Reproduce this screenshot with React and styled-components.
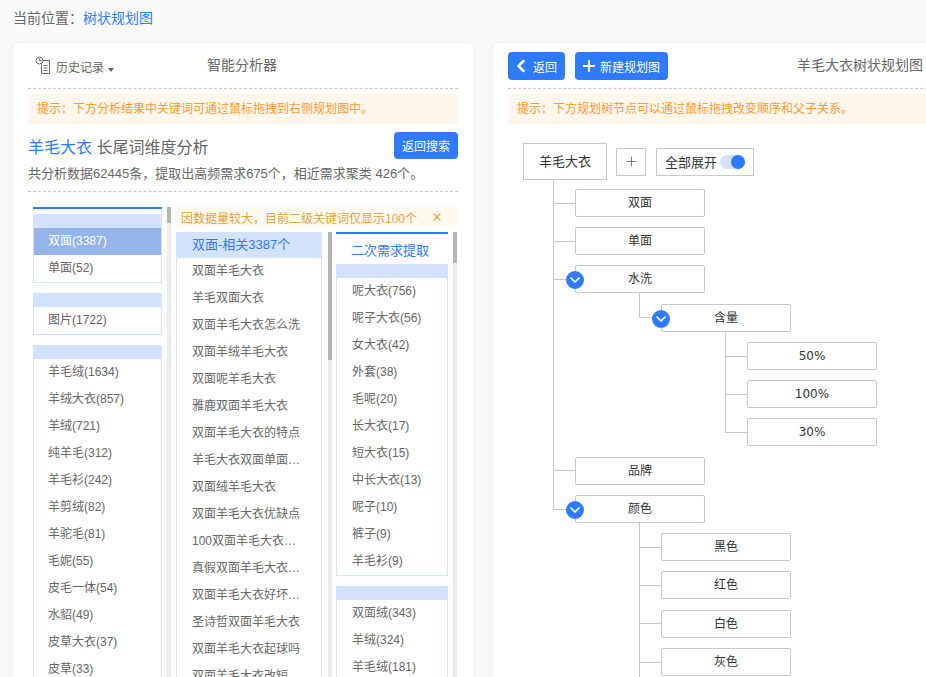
import React from "react";
import styled, { createGlobalStyle } from "styled-components";
import { ChevronDown, ChevronLeft, Plus, X } from "lucide-react";

const BLUE = "#2e7bff";
const PALE = "#d3e3fd";
const LINE = "#c8c8c8";

const colOne = [
  { id: "a", rows: [{ text: "双面(3387)", active: true }, { text: "单面(52)" }] },
  { id: "b", rows: [{ text: "图片(1722)" }] },
  {
    id: "c",
    rows: [
      "羊毛绒(1634)", "羊绒大衣(857)", "羊绒(721)", "纯羊毛(312)", "羊毛衫(242)", "羊剪绒(82)",
      "羊驼毛(81)", "毛妮(55)", "皮毛一体(54)", "水貂(49)", "皮草大衣(37)", "皮草(33)",
    ].map((text) => ({ text })),
  },
];

const colTwo = [
  "双面羊毛大衣", "羊毛双面大衣", "双面羊毛大衣怎么洗", "双面羊绒羊毛大衣", "双面呢羊毛大衣", "雅鹿双面羊毛大衣",
  "双面羊毛大衣的特点", "羊毛大衣双面单面区别", "双面绒羊毛大衣", "双面羊毛大衣优缺点", "100双面羊毛大衣怎么样",
  "真假双面羊毛大衣怎么看", "双面羊毛大衣好坏怎么看", "圣诗哲双面羊毛大衣", "双面羊毛大衣起球吗", "双面羊毛大衣改短",
];

const colThree = [
  {
    id: "a",
    rows: ["呢大衣(756)", "呢子大衣(56)", "女大衣(42)", "外套(38)", "毛呢(20)", "长大衣(17)", "短大衣(15)", "中长大衣(13)", "呢子(10)", "裤子(9)", "羊毛衫(9)"],
  },
  { id: "b", rows: ["双面绒(343)", "羊绒(324)", "羊毛绒(181)"] },
];

const tree = [
  { label: "双面" },
  { label: "单面" },
  {
    label: "水洗",
    children: [{ label: "含量", children: [{ label: "50%" }, { label: "100%" }, { label: "30%" }] }],
  },
  { label: "品牌" },
  {
    label: "颜色",
    children: [{ label: "黑色" }, { label: "红色" }, { label: "白色" }, { label: "灰色" }, { label: "蓝色" }],
  },
];

const TreeBranch = ({ items, root }) => (
  <ChildList $root={root}>
    {items.map((item, i) => (
      <ChildItem key={item.label} $last={i === items.length - 1}>
        <NodeBox>
          {item.children && (
            <Toggle>
              <ChevronDown size={16} strokeWidth={2.5} />
            </Toggle>
          )}
          {item.label}
        </NodeBox>
        {item.children && <TreeBranch items={item.children} />}
      </ChildItem>
    ))}
  </ChildList>
);

const HistoryIcon = () => (
  <svg width="17" height="19" viewBox="0 0 17 19" fill="none" stroke="#666" strokeWidth="1">
    <path d="M7 4.5H14.5V17.5H6.5V8.5" />
    <path d="M8.5 9.5H12.5M8.5 12H12.5M8.5 14.5H12.5" />
    <circle cx="4.5" cy="4.5" r="3.5" fill="#fff" />
    <path d="M4.5 2.5V4.5H6.5" />
  </svg>
);

const App = () => {
  return (
    <>
      <GlobalStyle />
      <Page>
        <Crumb>
          当前位置：<CrumbLink>树状规划图</CrumbLink>
        </Crumb>
        <Cards>
          <Card>
            <CardHead>
              <History>
                <HistoryIcon />
                <HistoryLabel>历史记录</HistoryLabel>
                <Caret />
              </History>
              <AnalyzerTitle>智能分析器</AnalyzerTitle>
            </CardHead>
            <Tip>提示：下方分析结果中关键词可通过鼠标拖拽到右侧规划图中。</Tip>
            <TitleRow>
              <Title>
                <TitleKey>羊毛大衣</TitleKey> 长尾词维度分析
              </Title>
              <SearchButton>返回搜索</SearchButton>
            </TitleRow>
            <Summary>共分析数据62445条，提取出高频需求675个，相近需求聚类 426个。</Summary>
            <Analysis>
              <ColumnOne>
                {colOne.map((group) => (
                  <Group key={group.id}>
                    <Strip />
                    {group.rows.map((row) => (
                      <Row key={row.text} $active={row.active} $indent={14}>
                        {row.text}
                      </Row>
                    ))}
                  </Group>
                ))}
              </ColumnOne>
              <Track $margin="5px">
                <Thumb $height={16} />
              </Track>
              <Side>
                <Warning>
                  因数据量较大，目前二级关键词仅显示100个
                  <X size={12} strokeWidth={2.5} />
                </Warning>
                <SideColumns>
                  <ColumnTwo>
                    <RelatedHead>双面-相关3387个</RelatedHead>
                    {colTwo.map((text) => (
                      <Row key={text}>
                        <Clip>{text}</Clip>
                      </Row>
                    ))}
                  </ColumnTwo>
                  <Track $margin="6px">
                    <Thumb $height={128} />
                  </Track>
                  <ColumnThree>
                    <ExtractHead>二次需求提取</ExtractHead>
                    {colThree.map((group) => (
                      <Group key={group.id}>
                        <Strip />
                        {group.rows.map((text) => (
                          <Row key={text}>{text}</Row>
                        ))}
                      </Group>
                    ))}
                  </ColumnThree>
                  <Track $margin="5px">
                    <Thumb $height={31} />
                  </Track>
                </SideColumns>
              </Side>
            </Analysis>
          </Card>

          <Card>
            <CardHead>
              <BlueButton $pad={3}>
                <ChevronLeft size={20} strokeWidth={3} />
                返回
              </BlueButton>
              <BlueButton $pad={5}>
                <Plus size={18} strokeWidth={2.5} />
                新建规划图
              </BlueButton>
              <PlanTitle>羊毛大衣树状规划图</PlanTitle>
            </CardHead>
            <Tip>提示：下方规划树节点可以通过鼠标拖拽改变顺序和父子关系。</Tip>
            <TreeArea>
              <RootRow>
                <RootBox>羊毛大衣</RootBox>
                <AddBox>
                  <Plus size={15} strokeWidth={1.25} />
                </AddBox>
                <ExpandBox>
                  全部展开
                  <SwitchTrack>
                    <SwitchThumb />
                  </SwitchTrack>
                </ExpandBox>
              </RootRow>
              <TreeBranch items={tree} root />
            </TreeArea>
          </Card>
        </Cards>
      </Page>
    </>
  );
};

const GlobalStyle = createGlobalStyle`
  html, body {
    margin: 0;
    height: 100%;
    overflow: hidden;
    background: #fafafa;
  }
  body {
    font-family: "Liberation Sans", "Noto Sans CJK SC", sans-serif;
    color: #666;
  }
  * {
    box-sizing: border-box;
  }
`;

const Page = styled.div`
  height: 677px;
  overflow: hidden;
  padding-left: 13px;
`;

const Crumb = styled.div`
  height: 43px;
  padding-top: 8px;
  font-size: 14px;
  line-height: 20px;
  color: #666;
`;

const CrumbLink = styled.span`
  color: ${BLUE};
`;

const Cards = styled.div`
  display: flex;
  gap: 20px;
  width: 960px;
`;

const Card = styled.div`
  flex: 0 0 460px;
  height: 640px;
  padding: 0 15px;
  background: #fff;
  border-radius: 5px;
  box-shadow: 0 0 5px rgba(0, 0, 0, 0.05);
`;

const CardHead = styled.div`
  display: flex;
  align-items: flex-start;
  height: 46px;
  padding-top: 9px;
  border-bottom: 1px dashed ${LINE};
`;

const History = styled.div`
  display: flex;
  align-items: flex-start;
  margin-left: 7px;
  padding-top: 4px;
`;

const HistoryLabel = styled.span`
  margin: 3px 0 0 4px;
  font-size: 12px;
  line-height: 18px;
`;

const Caret = styled.i`
  width: 0;
  height: 0;
  margin: 12px 0 0 4px;
  border-left: 3.5px solid transparent;
  border-right: 3.5px solid transparent;
  border-top: 4px solid #666;
`;

const AnalyzerTitle = styled.div`
  margin-left: 93px;
  font-size: 14px;
  line-height: 26px;
`;

const Tip = styled.div`
  height: 30px;
  margin-top: 5px;
  padding-left: 9px;
  font-size: 12px;
  line-height: 30px;
  color: #ff9a33;
  background: #fff6ec;
`;

const TitleRow = styled.div`
  display: flex;
  justify-content: space-between;
  margin-top: 8px;
`;

const Title = styled.div`
  padding-top: 4px;
  font-size: 16px;
  line-height: 24px;
`;

const TitleKey = styled.span`
  color: ${BLUE};
`;

const SearchButton = styled.button`
  width: 64px;
  height: 27px;
  padding: 0;
  font: inherit;
  font-size: 12px;
  color: #fff;
  background: ${BLUE};
  border: none;
  border-radius: 4px;
`;

const Summary = styled.div`
  height: 32px;
  padding-top: 5px;
  font-size: 13px;
  line-height: 18px;
  border-bottom: 1px dashed ${LINE};
`;

const Analysis = styled.div`
  display: flex;
  align-items: flex-start;
  margin-top: 15px;
  padding-left: 5px;
`;

const ColumnOne = styled.div`
  flex: 0 0 129px;
  padding-top: 5px;
  border-top: 2px solid ${BLUE};
`;

const Group = styled.div`
  margin-bottom: 10px;
  border: 1px solid ${PALE};
  border-top: none;
`;

const Strip = styled.div`
  height: 14px;
  margin: 0 -1px;
  background: ${PALE};
`;

const Row = styled.div`
  height: 27px;
  padding-left: ${(p) => p.$indent ?? 15}px;
  font-size: 12px;
  line-height: 27px;
  white-space: nowrap;
  color: ${(p) => (p.$active ? "#fff" : "#666")};
  background: ${(p) => (p.$active ? "#94b4ea" : "transparent")};
`;

const Clip = styled.div`
  width: 112px;
  overflow: hidden;
  text-overflow: ellipsis;
`;

const Track = styled.div`
  flex: 0 0 4px;
  align-self: stretch;
  margin-left: ${(p) => p.$margin};
  background: #ececec;
`;

const Thumb = styled.div`
  height: ${(p) => p.$height}px;
  background: #b5b5b5;
`;

const Side = styled.div`
  flex: 1;
  margin-left: 5px;
`;

const Warning = styled.div`
  display: flex;
  align-items: center;
  justify-content: space-between;
  height: 20px;
  padding: 0 15px 0 5px;
  font-size: 12px;
  color: #e6a23c;
  background: #fffaef;
`;

const SideColumns = styled.div`
  display: flex;
  margin-top: 5px;
`;

const ColumnTwo = styled.div`
  flex: 0 0 146px;
  border-left: 1px solid ${PALE};
  border-right: 1px solid ${PALE};
`;

const RelatedHead = styled.div`
  height: 26px;
  margin: 0 -1px;
  padding-left: 16px;
  font-size: 13px;
  line-height: 26px;
  color: ${BLUE};
  background: ${PALE};
`;

const ColumnThree = styled.div`
  flex: 0 0 112px;
  margin-left: 4px;
  border-top: 2px solid ${BLUE};
`;

const ExtractHead = styled.div`
  height: 30px;
  padding-left: 15px;
  font-size: 13px;
  line-height: 34px;
  color: ${BLUE};
`;

const BlueButton = styled.button`
  display: flex;
  align-items: center;
  gap: 2px;
  height: 28px;
  margin-right: 10px;
  padding: 0 8px 0 ${(p) => p.$pad}px;
  font: inherit;
  font-size: 12px;
  color: #fff;
  background: ${BLUE};
  border: none;
  border-radius: 4px;
`;

const PlanTitle = styled.div`
  margin-left: 119px;
  font-size: 14px;
  line-height: 26px;
`;

const TreeArea = styled.div`
  padding: 19px 0 0 15px;
`;

const RootRow = styled.div`
  display: flex;
  align-items: center;
  gap: 9px;
`;

const RootBox = styled.div`
  width: 84px;
  height: 37px;
  font-size: 13px;
  line-height: 35px;
  text-align: center;
  color: #333;
  border: 1px solid ${LINE};
`;

const AddBox = styled.div`
  display: flex;
  align-items: center;
  justify-content: center;
  width: 30px;
  height: 28px;
  color: #555;
  border: 1px solid ${LINE};
`;

const ExpandBox = styled.div`
  display: flex;
  align-items: center;
  gap: 3px;
  width: 98px;
  height: 28px;
  margin-left: 1px;
  padding-left: 8px;
  font-size: 13px;
  color: #333;
  border: 1px solid ${LINE};
`;

const SwitchTrack = styled.span`
  display: flex;
  justify-content: flex-end;
  width: 25px;
  height: 14px;
  background: ${PALE};
  border-radius: 7px;
`;

const SwitchThumb = styled.span`
  width: 14px;
  height: 14px;
  background: ${BLUE};
  border-radius: 50%;
`;

const ChildList = styled.div`
  margin-left: ${(p) => (p.$root ? "30px" : "64px")};
  margin-top: ${(p) => (p.$root ? "-1.35px" : "0")};
`;

const ChildItem = styled.div`
  position: relative;
  padding: 10.25px 0 0 22px;

  &::before {
    content: "";
    position: absolute;
    left: 0;
    top: 0;
    width: 1px;
    height: ${(p) => (p.$last ? "24px" : "100%")};
    background: ${LINE};
  }

  &::after {
    content: "";
    position: absolute;
    left: 0;
    top: 24px;
    width: 22px;
    height: 1px;
    background: ${LINE};
  }
`;

const NodeBox = styled.div`
  position: relative;
  z-index: 1;
  width: 130px;
  height: 28px;
  font-family: "DejaVu Sans", "Noto Sans CJK SC", sans-serif;
  font-size: 12px;
  line-height: 26px;
  text-align: center;
  color: #333;
  background: #fff;
  border: 1px solid ${LINE};
  border-radius: 2px;
`;

const Toggle = styled.span`
  position: absolute;
  left: -10px;
  top: 5px;
  display: flex;
  align-items: center;
  justify-content: center;
  width: 18px;
  height: 18px;
  color: #fff;
  background: ${BLUE};
  border-radius: 50%;
`;

export default App;
